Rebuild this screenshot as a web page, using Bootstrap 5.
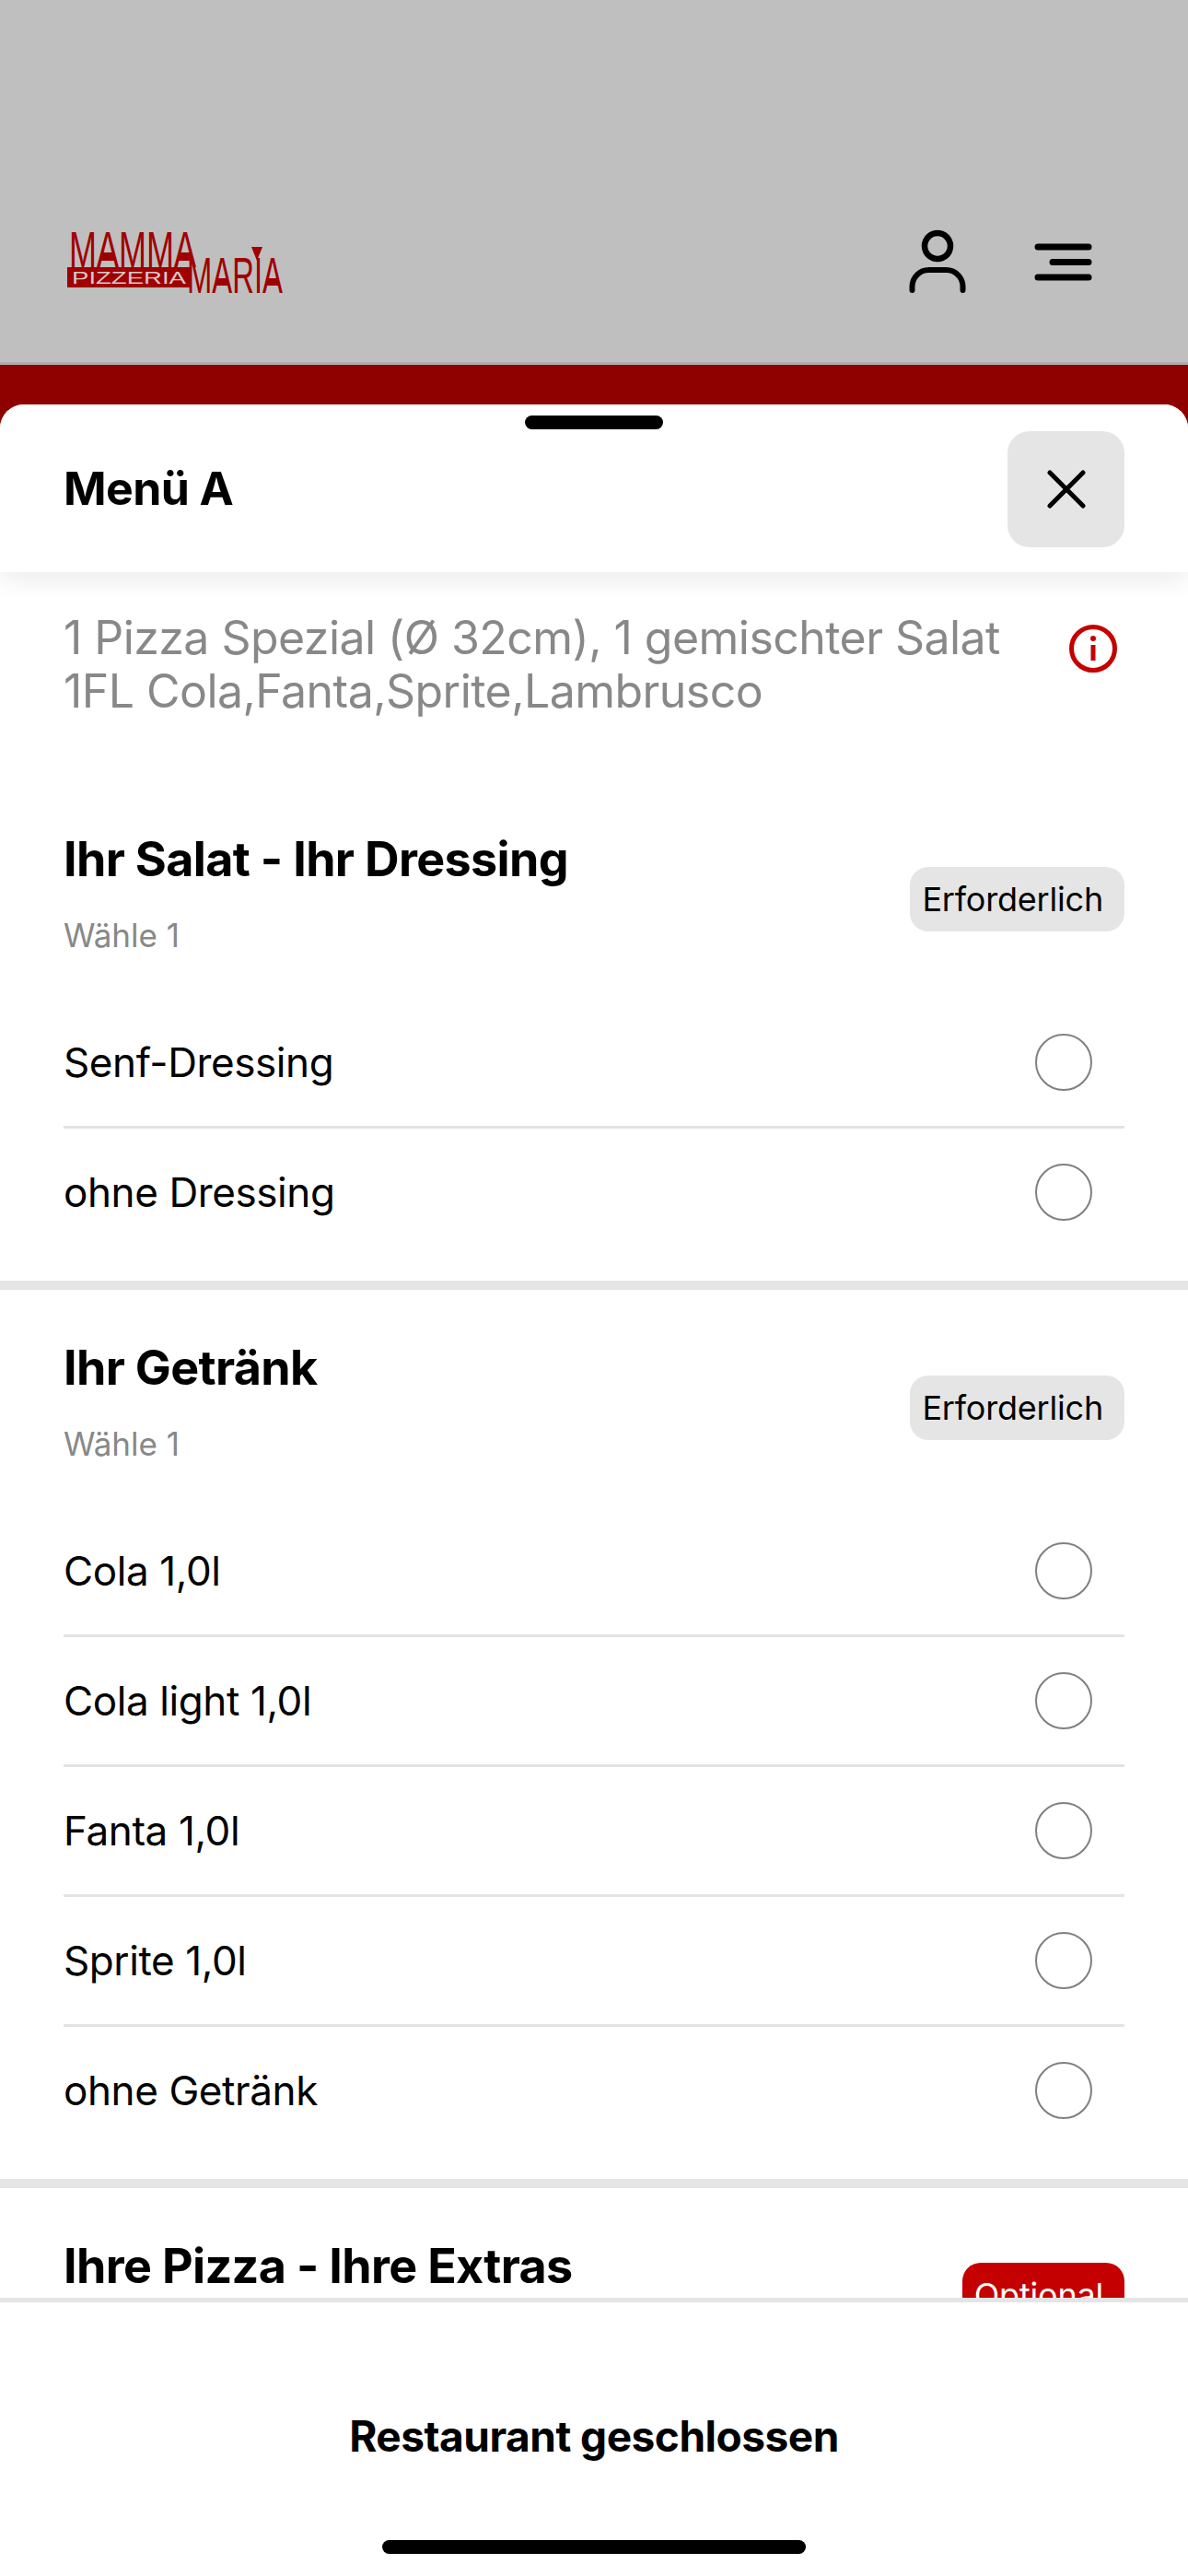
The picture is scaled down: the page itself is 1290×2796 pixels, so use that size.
<!DOCTYPE html>
<html lang="de">
<head>
    <meta charset="UTF-8">
    <meta name="viewport" content="width=device-width, initial-scale=1">
    <title>Menü A</title>
    <link href="https://cdn.jsdelivr.net/npm/bootstrap@5.3.0/dist/css/bootstrap.min.css" rel="stylesheet">
    <style>
        html, body { height: 2796px; margin: 0; overflow: hidden; }
        body { position: relative; font-family: Inter, "Liberation Sans", sans-serif; color: #000; background: #fff; }
        .top-bar { height: 396px; background: #bfbfbf; border-bottom: 3px solid #adadad; padding: 0 102px 75px 71px; }
        .red-strip { height: 100px; background: #8f0000; }
        .logo-svg { width: 240px; height: 72px; display: block; overflow: visible; }
        .icon-gap { gap: 68px; }
        .sheet { position: absolute; top: 439px; left: 0; right: 0; bottom: 0; background: #fff; border-radius: 26px 26px 0 0; overflow: hidden; }
        .sheet-head { height: 182px; padding: 29px 69px 27px 69px; position: relative; z-index: 2; box-shadow: 0 10px 24px rgba(0,0,0,.07); background: #fff; }
        .grab-bar { position: absolute; top: 12px; left: 570px; width: 150px; height: 15px; border-radius: 8px; background: #000; }
        .sheet-title { font-size: 50px; font-weight: 700; letter-spacing: -0.6px; margin: -3px 0 0; }
        .close-btn { width: 127px; height: 126px; background: #e5e5e5; border: 0; border-radius: 24px; }
        .sheet-body { overflow: hidden; }
        .intro { padding: 42px 77px 0 69px; height: 283px; }
        .intro-text { font-size: 50px; line-height: 58px; color: #888; margin: 0; letter-spacing: -0.55px; white-space: nowrap; }
        .info-svg { margin-top: 15px; flex-shrink: 0; }
        .option-group { border-bottom: 10px solid #e5e5e5; padding-bottom: 24px; }
        .option-group + .option-group { padding-top: 56px; }
        .group-head { padding: 0 69px; height: 180px; }
        .group-title { font-size: 52px; font-weight: 700; letter-spacing: -0.65px; line-height: 58px; margin: 0 0 33px; }
        .group-hint { font-size: 35px; line-height: 40px; color: #888; }
        .req-pill { font-size: 36px; line-height: 1; letter-spacing: -0.2px; padding: 17px 23px 17px 13px; border-radius: 20px; background: #e5e5e5; color: #000; font-weight: 400; margin-top: 37px; }
        .req-pill.is-optional { background: #c40000; color: #fff; margin-top: 25px; }
        .pick-list { margin: 0 69px; }
        .pick-list .list-group-item { height: 141px; padding: 0 35px 0 0; font-size: 44px; letter-spacing: -0.4px; color: #000; border-color: #e3e3e3; border-width: 0 0 3px; }
        .pick-list .list-group-item:last-child { border-bottom: 3px solid transparent; }
        .pick-list .form-check-input { width: 62px; height: 62px; margin: 0; border: 2px solid #808080; background-color: #fff; }
        .sheet-foot { position: absolute; left: 0; right: 0; bottom: 0; height: 302px; background: #fff; border-top: 5px solid #e5e5e5; padding-top: 118px; z-index: 3; }
        .closed-label { font-size: 46px; font-weight: 700; line-height: 54px; letter-spacing: -0.5px; }
        .home-bar { width: 460px; height: 15px; border-radius: 8px; background: #000; margin-top: 86px; }
    </style>
</head>
<body>
    <header class="top-bar d-flex justify-content-between align-items-end">
        <svg class="logo-svg" viewBox="71 246 240 72" xmlns="http://www.w3.org/2000/svg" role="img" aria-label="Pizzeria Mamma Maria">
            <path d="M110 274h14v9h-14zM194 274h14v9h-14zM234 302h14v8h-14zM289 302h14v8h-14z" fill="#a00000"/>
            <text x="75" y="290" font-family="Liberation Sans" font-size="56" textLength="138" lengthAdjust="spacingAndGlyphs" fill="#a00000">MAMMA</text>
            <rect x="73" y="290" width="134" height="22" fill="#a00000"/>
            <text x="78" y="308" font-family="Liberation Sans" font-size="19" textLength="124" lengthAdjust="spacingAndGlyphs" fill="#d9c8c8">PIZZERIA</text>
            <text x="203" y="318" font-family="Liberation Sans" font-size="56" textLength="104" lengthAdjust="spacingAndGlyphs" fill="#a00000">MARIA</text>
            <path d="M273 268h12l-6 15z" fill="#a00000"/>
        </svg>
        <div class="d-flex align-items-end icon-gap">
            <svg width="68" height="76" viewBox="984 242 68 76" fill="none" stroke="#000" stroke-linecap="round" xmlns="http://www.w3.org/2000/svg">
                <circle cx="1018" cy="267" r="14" stroke-width="6.500"/>
                <path d="M990.500 315v-4a18 18 0 0 1 18-18h19a18 18 0 0 1 18 18v4" stroke-width="6"/>
            </svg>
            <svg width="68" height="76" viewBox="1120 242 68 76" fill="none" stroke="#000" stroke-width="7" stroke-linecap="round" xmlns="http://www.w3.org/2000/svg">
                <path d="M1127 268h55M1143 284.500h39M1127 301h55"/>
            </svg>
        </div>
    </header>
    <div class="red-strip"></div>

    <section class="sheet">
        <div class="sheet-head d-flex justify-content-between align-items-center">
            <span class="grab-bar"></span>
            <h1 class="sheet-title">Menü A</h1>
            <button class="close-btn d-flex align-items-center justify-content-center" type="button" aria-label="Schließen">
                <svg width="42" height="42" viewBox="0 0 42 42" stroke="#000" stroke-width="5" stroke-linecap="round" xmlns="http://www.w3.org/2000/svg"><path d="M3 3l36 36M39 3L3 39"/></svg>
            </button>
        </div>

        <div class="sheet-body">
            <div class="intro d-flex justify-content-between align-items-start">
                <p class="intro-text">1 Pizza Spezial (Ø 32cm), 1 gemischter Salat<br>1FL Cola,Fanta,Sprite,Lambrusco</p>
                <svg class="info-svg" width="52" height="52" viewBox="0 0 52 52" xmlns="http://www.w3.org/2000/svg">
                    <circle cx="26" cy="26" r="23.500" fill="none" stroke="#c40000" stroke-width="5"/>
                    <circle cx="26" cy="15" r="3" fill="#c40000"/>
                    <path d="M26 22v17" stroke="#c40000" stroke-width="5"/>
                </svg>
            </div>

            <div class="option-group">
                <div class="group-head d-flex justify-content-between align-items-start">
                    <div>
                        <h2 class="group-title">Ihr Salat - Ihr Dressing</h2>
                        <div class="group-hint">Wähle 1</div>
                    </div>
                    <span class="req-pill">Erforderlich</span>
                </div>
                <div class="list-group list-group-flush pick-list">
                    <label class="list-group-item d-flex justify-content-between align-items-center">Senf-Dressing <input class="form-check-input" type="radio" name="dressing"></label>
                    <label class="list-group-item d-flex justify-content-between align-items-center">ohne Dressing <input class="form-check-input" type="radio" name="dressing"></label>
                </div>
            </div>

            <div class="option-group">
                <div class="group-head d-flex justify-content-between align-items-start">
                    <div>
                        <h2 class="group-title">Ihr Getränk</h2>
                        <div class="group-hint">Wähle 1</div>
                    </div>
                    <span class="req-pill">Erforderlich</span>
                </div>
                <div class="list-group list-group-flush pick-list">
                    <label class="list-group-item d-flex justify-content-between align-items-center">Cola 1,0l <input class="form-check-input" type="radio" name="drink"></label>
                    <label class="list-group-item d-flex justify-content-between align-items-center">Cola light 1,0l <input class="form-check-input" type="radio" name="drink"></label>
                    <label class="list-group-item d-flex justify-content-between align-items-center">Fanta 1,0l <input class="form-check-input" type="radio" name="drink"></label>
                    <label class="list-group-item d-flex justify-content-between align-items-center">Sprite 1,0l <input class="form-check-input" type="radio" name="drink"></label>
                    <label class="list-group-item d-flex justify-content-between align-items-center">ohne Getränk <input class="form-check-input" type="radio" name="drink"></label>
                </div>
            </div>

            <div class="option-group">
                <div class="group-head d-flex justify-content-between align-items-start">
                    <h2 class="group-title">Ihre Pizza - Ihre Extras</h2>
                    <span class="req-pill is-optional">Optional</span>
                </div>
            </div>
        </div>

        <footer class="sheet-foot d-flex flex-column align-items-center">
            <div class="closed-label">Restaurant geschlossen</div>
            <div class="home-bar"></div>
        </footer>
    </section>

    <script src="https://cdn.jsdelivr.net/npm/bootstrap@5.3.0/dist/js/bootstrap.bundle.min.js"></script>
</body>
</html>
